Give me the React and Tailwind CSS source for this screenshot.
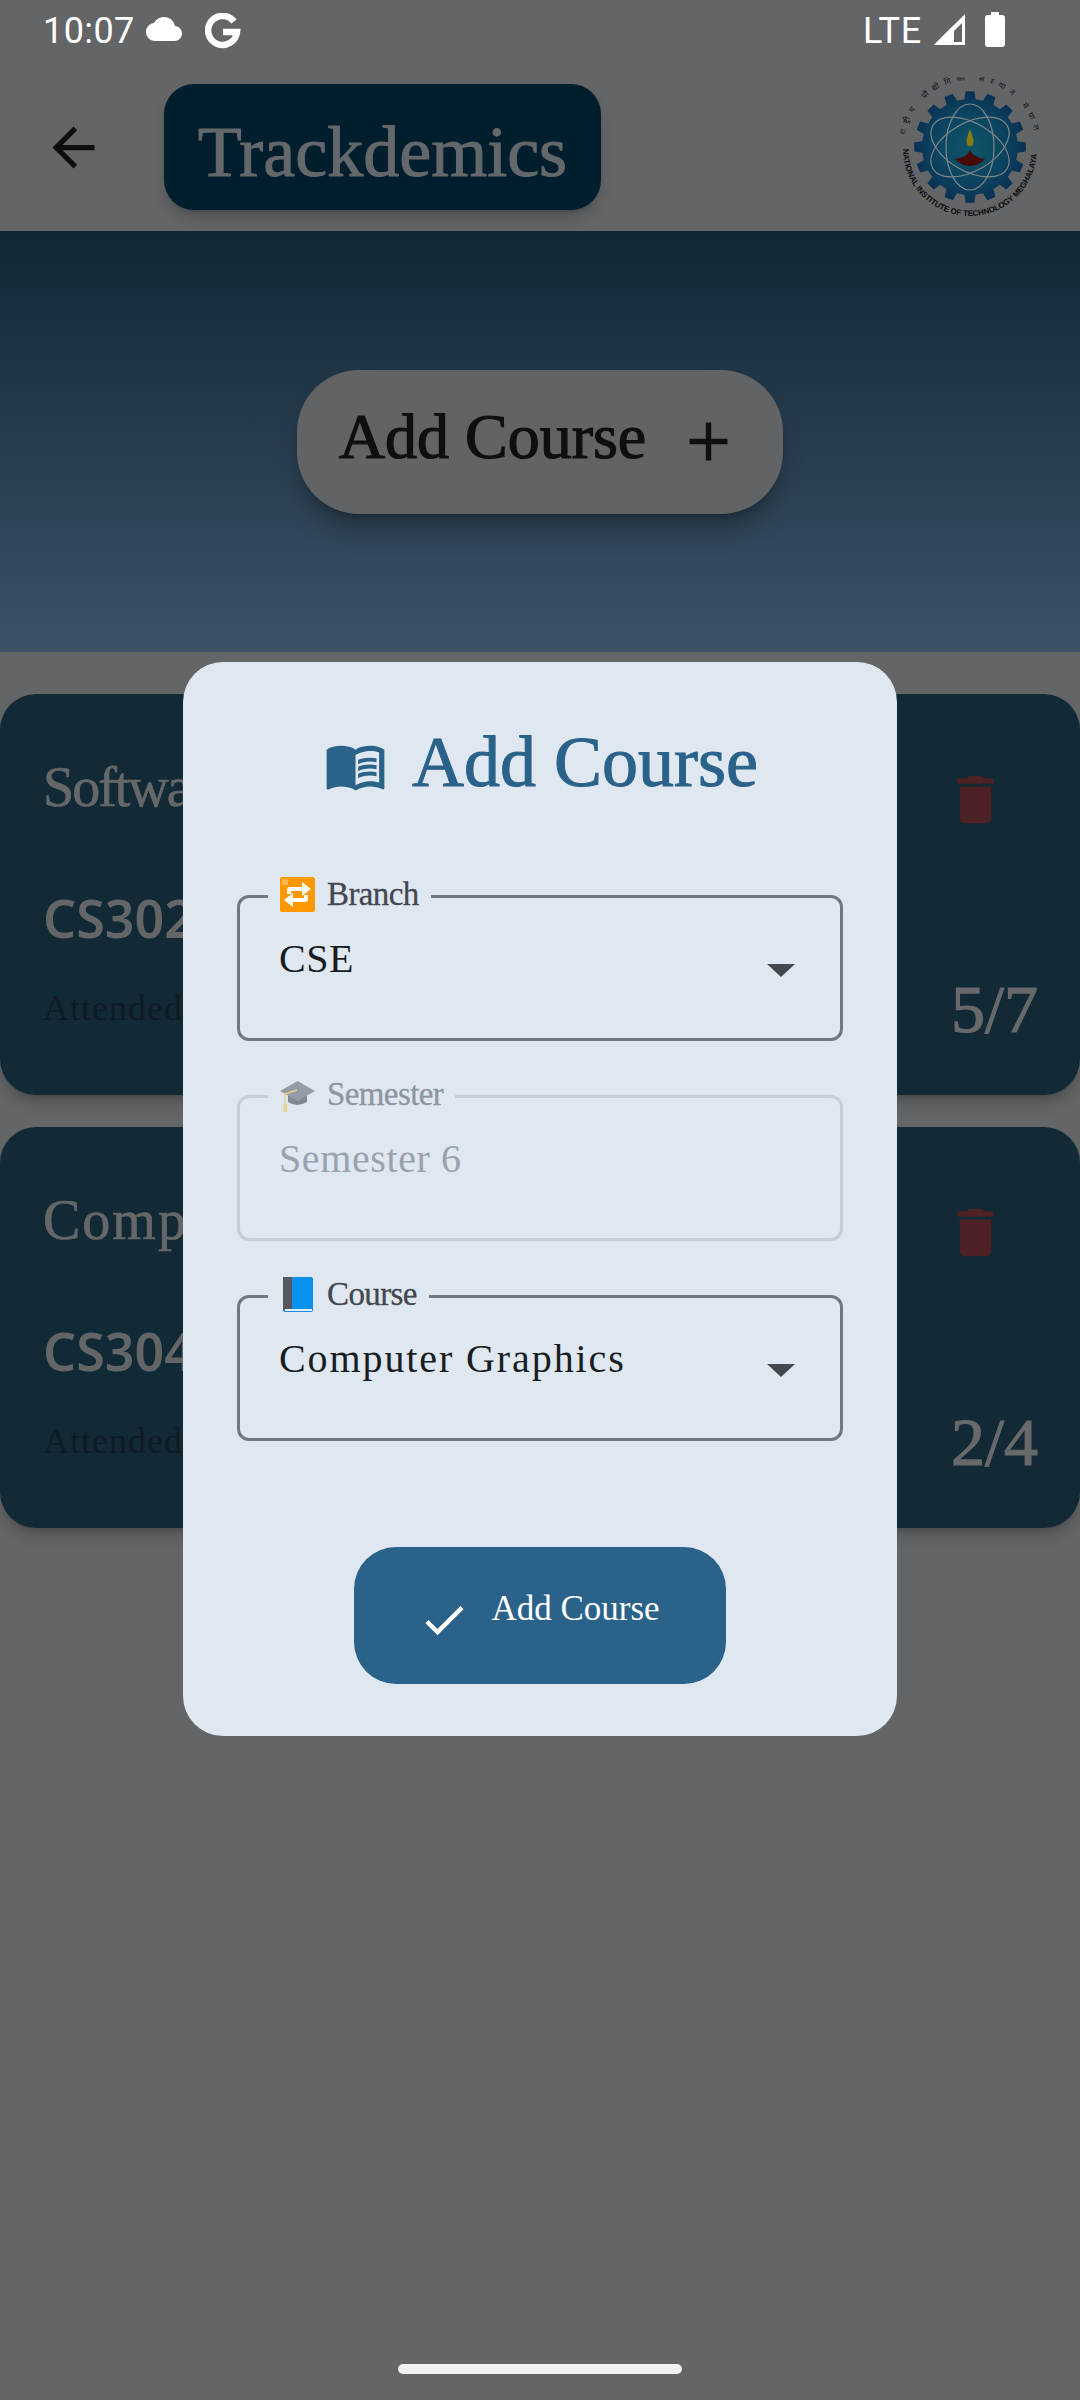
import React from 'react';

const serif = "font-['Liberation_Serif',serif]";

// gear outline for the college logo
function gearPath(cx, cy, outer, inner, teeth) {
    let d = '';
    const step = (Math.PI * 2) / teeth;
    for (let i = 0; i < teeth; i++) {
        const a = i * step - Math.PI / 2;
        const pts = [
            [inner, a - step * 0.5],
            [inner, a - step * 0.3],
            [outer, a - step * 0.2],
            [outer, a + step * 0.2],
            [inner, a + step * 0.3],
        ];
        pts.forEach(([r, t], j) => {
            const x = (cx + r * Math.cos(t)).toFixed(2);
            const y = (cy + r * Math.sin(t)).toFixed(2);
            d += `${i === 0 && j === 0 ? 'M' : 'L'}${x} ${y} `;
        });
    }
    return d + 'Z';
}

function Logo() {
    return (
        <svg width="140" height="140" viewBox="0 0 140 140">
            <defs>
                <radialGradient id="gearFill" cx="50%" cy="50%" r="50%">
                    <stop offset="0%" stopColor="#0f5568" />
                    <stop offset="65%" stopColor="#0c4360" />
                    <stop offset="100%" stopColor="#0a3054" />
                </radialGradient>
                <path id="bottomArc" d="M3 72 A67 67 0 0 0 137 72" />
                <path id="topArc" d="M5 58 A66 66 0 0 1 135 58" />
            </defs>
            <path d={gearPath(70, 70, 56, 48, 16)} fill="url(#gearFill)" />
            <g fill="none" stroke="#7f8688" strokeWidth="1.2">
                <ellipse cx="70" cy="70" rx="24" ry="43" />
                <ellipse cx="70" cy="70" rx="24" ry="43" transform="rotate(60 70 70)" />
                <ellipse cx="70" cy="70" rx="24" ry="43" transform="rotate(120 70 70)" />
            </g>
            <path d="M70 52 C73 60 74 64 73 67 C72 70 68 70 67 67 C66 64 67 60 70 52 Z" fill="#8a7a12" />
            <path d="M55 82 C63 81 68 78 70 73 C72 78 77 81 85 82 C80 87 75 89 70 89 C65 89 60 87 55 82 Z" fill="#470a05" />
            <text fontFamily="'Liberation Sans',sans-serif" fontWeight="700" fontSize="8" fill="#0c0c0c">
                <textPath href="#bottomArc" startOffset="0" textLength="205">NATIONAL INSTITUTE OF TECHNOLOGY MEGHALAYA</textPath>
            </text>
            <text fontFamily="'Noto Sans',sans-serif" fontSize="8" fill="#141414">
                <textPath href="#topArc" startOffset="0" textLength="190">राष्ट्रीय प्रौद्योगिकी संस्थान मेघालय</textPath>
            </text>
        </svg>
    );
}

function StatusBar() {
    return (
        <div className="h-[60px] flex items-center pl-[43px] pr-[75px] pt-[1px] text-white font-['Roboto',sans-serif] text-[36px]">
            <span className="leading-none tracking-[0.4px]">10:07</span>
            <svg className="ml-[11px] -mt-[3px]" width="36" height="36" viewBox="0 0 24 24" fill="#fff">
                <path d="M19.35 10.04C18.67 6.59 15.64 4 12 4 9.11 4 6.64 5.64 5.35 8.04 2.34 8.36 0 10.91 0 14c0 3.31 2.69 6 6 6h13c2.76 0 5-2.24 5-5 0-2.64-2.05-4.78-4.65-4.96z" />
            </svg>
            <svg className="ml-[23px]" width="36" height="36" viewBox="0 0 36 36" fill="none" stroke="#fff" strokeWidth="6.5">
                <path d="M29 8.5 A14.5 14.5 0 1 0 32 19 H18" />
            </svg>
            <span className="ml-auto leading-none tracking-[0.8px]">LTE</span>
            <svg className="ml-[11px] -mt-[3px]" width="33" height="33" viewBox="0 0 33 33">
                <path d="M32 1 V32 H1 Z M29 10 L10 29 H29 Z" fill="#fff" fillRule="evenodd" />
                <path d="M21 32 V12 L1 32 Z" fill="#fff" />
            </svg>
            <svg className="ml-[19px] -mt-[2px]" width="20" height="35" viewBox="0 0 20 35" fill="#fff">
                <path d="M6 0 H14 V3 H17 Q20 3 20 6 V32 Q20 35 17 35 H3 Q0 35 0 32 V6 Q0 3 3 3 H6 Z" />
            </svg>
        </div>
    );
}

function Header() {
    return (
        <div className="h-[171px] flex items-center pl-[42px] pr-[40px] pt-[3px]">
            <svg width="63" height="63" viewBox="0 0 24 24" fill="#0e0e0e">
                <path d="M20 11H7.83l5.59-5.59L12 4l-8 8 8 8 1.41-1.41L7.83 13H20v-2z" />
            </svg>
            <div className={`ml-[59px] w-[437px] h-[126px] rounded-[30px] bg-[#001e2e] shadow-lg shadow-black/20 flex items-center justify-center pt-[9px] text-[72px] text-[#65686a] [-webkit-text-stroke:1px_#65686a] ${serif}`}>
                Trackdemics
            </div>
            <div className="ml-auto">
                <Logo />
            </div>
        </div>
    );
}

function Hero() {
    return (
        <div className="h-[421px] flex items-center justify-center bg-gradient-to-b from-[#122736] to-[#3d5267]">
            <div className="w-[486px] h-[144px] rounded-[62px] bg-[#626364] shadow-xl shadow-black/25 flex items-center justify-center">
                <span className={`-mt-[9px] text-[64px] leading-none text-[#0f0f0f] [-webkit-text-stroke:1.2px_#0f0f0f] ${serif}`}>Add Course</span>
                <svg className="ml-[30px]" width="65" height="65" viewBox="0 0 24 24" fill="#0f0f0f">
                    <path d="M19 13h-6v6h-2v-6H5v-2h6V5h2v6h6v2z" />
                </svg>
            </div>
        </div>
    );
}

function CourseCard({ name, nameTracking, code, score }) {
    return (
        <div className="h-[401px] rounded-[36px] bg-[#122936] shadow-lg shadow-black/20 flex justify-between pl-[43px] pt-[59px]">
            <div className="flex flex-col">
                <span className={`text-[56px] leading-[68px] ${nameTracking} text-[#666768] [-webkit-text-stroke:0.7px_#666768] whitespace-nowrap ${serif}`}>{name}</span>
                <span className="mt-[62px] text-[52px] leading-[70px] font-semibold text-[#646566] font-['Noto_Sans',sans-serif]">{code}</span>
                <span className={`mt-[33px] text-[36px] leading-[44px] tracking-[1px] text-[#0f1b24] whitespace-nowrap ${serif}`}>Attended: {score}</span>
            </div>
            <div className="flex flex-col items-end pr-[42px]">
                <svg className="mt-[15px] mr-[31px]" width="63" height="63" viewBox="0 0 24 24" fill="#4e2125">
                    <path d="M6 19c0 1.1.9 2 2 2h8c1.1 0 2-.9 2-2V7H6v12zM19 4h-3.5l-1-1h-5l-1 1H5v2h14V4z" />
                </svg>
                <span className={`mt-[142px] text-[68px] leading-[72px] text-[#68696a] [-webkit-text-stroke:1.2px_#68696a] ${serif}`}>{score}</span>
            </div>
        </div>
    );
}

function RepeatEmoji() {
    return (
        <svg width="35" height="35" viewBox="0 0 35 35">
            <rect width="35" height="35" rx="2" fill="#ff9800" />
            <rect x="2" y="2" width="6" height="6" fill="#ffb74d" />
            <path d="M7 17 V13 Q7 10 10 10 H22 V5 L31 12 L22 19 V14 H11 V17 Z" fill="#fff" />
            <path d="M28 18 V22 Q28 25 25 25 H13 V30 L4 23 L13 16 V21 H24 V18 Z" fill="#fff" />
        </svg>
    );
}

function CapEmoji() {
    return (
        <svg width="35" height="35" viewBox="0 0 35 35">
            <path d="M8 17 V25 Q17 31 27 25 V17 Z" fill="#7f8791" />
            <path d="M17.5 4 L35 14 L17.5 24 L0 14 Z" fill="#959ca6" />
            <path d="M17 13 L5 17 V30" fill="none" stroke="#e8d28c" strokeWidth="1.6" />
            <rect x="3.5" y="27" width="3.5" height="8" fill="#e8d28c" />
        </svg>
    );
}

function BookEmoji() {
    return (
        <svg width="35" height="35" viewBox="0 0 35 35">
            <rect x="3" y="0" width="30" height="35" rx="2" fill="#1e88e5" />
            <rect x="3" y="0" width="9" height="33" fill="#54585f" />
            <rect x="12" y="0" width="20" height="32" fill="#0a91ee" />
            <rect x="5" y="32" width="27" height="2" fill="#e3eef8" />
        </svg>
    );
}

function Caret() {
    return (
        <svg className="mt-[29px]" width="28" height="13" viewBox="0 0 28 13" fill="#44474e">
            <path d="M0 0 H28 L14 13 Z" />
        </svg>
    );
}

function Field({ icon, label, value, disabled, tracking }) {
    return (
        <fieldset className={`h-[163px] rounded-[12px] border-[3px] ${disabled ? 'border-[#c7ced8]' : 'border-[#73777f]'}`}>
            <legend className="ml-[28px] px-[12px] h-[36px]">
                <span className="flex items-center gap-[12px] -mt-[2px]">
                    {icon}
                    <span className={`text-[33px] leading-[36px] tracking-[-0.6px] [-webkit-text-stroke:0.3px_currentColor] ${disabled ? 'text-[#8e95a0]' : 'text-[#44474e]'} ${serif}`}>{label}</span>
                </span>
            </legend>
            <div className="mt-[21px] pl-[39px] pr-[45px] flex justify-between items-start">
                <span className={`text-[40px] leading-[48px] ${tracking} ${disabled ? 'text-[#9aa2ad]' : 'text-[#191c20]'} ${serif}`}>{value}</span>
                {!disabled && <Caret />}
            </div>
        </fieldset>
    );
}

function AddCourseDialog() {
    return (
        <div className="absolute left-[183px] top-[662px] w-[714px] h-[1074px] rounded-[40px] bg-[#dfe7f1] px-[54px] flex flex-col">
            <div className="h-[200px] mb-[16px] flex items-center justify-center">
                <svg width="63" height="63" viewBox="0 0 24 24" fill="#2a628a" className="mt-[6px] ml-[2px]">
                    <path d="M21 5c-1.11-.35-2.33-.5-3.5-.5-1.95 0-4.05.4-5.5 1.5-1.45-1.1-3.55-1.5-5.5-1.5S2.45 4.9 1 6v14.65c0 .25.25.5.5.5.1 0 .15-.05.25-.05C3.1 20.45 5.05 20 6.5 20c1.95 0 4.05.4 5.5 1.5 1.35-.85 3.8-1.5 5.5-1.5 1.65 0 3.35.3 4.75 1.05.1.05.15.05.25.05.25 0 .5-.25.5-.5V6c-.6-.45-1.25-.75-2-1zm0 13.5c-1.1-.35-2.3-.5-3.5-.5-1.7 0-4.15.65-5.5 1.5V8c1.35-.85 3.8-1.5 5.5-1.5 1.2 0 2.4.15 3.5.5v11.5z" />
                    <path d="M17.5 10.5c.88 0 1.73.09 2.5.26V9.24c-.79-.15-1.64-.24-2.5-.24-1.7 0-3.24.29-4.5.83v1.66c1.13-.64 2.7-.99 4.5-.99zM13 12.49v1.66c1.13-.64 2.7-.99 4.5-.99.88 0 1.73.09 2.5.26V11.9c-.79-.15-1.64-.24-2.5-.24-1.7 0-3.24.3-4.5.83zM17.5 14.33c-1.7 0-3.24.29-4.5.83v1.66c1.13-.64 2.7-.99 4.5-.99.88 0 1.73.09 2.5.26v-1.52c-.79-.16-1.64-.24-2.5-.24z" />
                </svg>
                <span className={`ml-[25px] text-[72px] leading-none text-[#2a628a] [-webkit-text-stroke:1px_#2a628a] ${serif}`}>Add Course</span>
            </div>
            <div className="flex flex-col gap-[37px]">
                <Field icon={<RepeatEmoji />} label="Branch" value="CSE" tracking="tracking-[0.5px]" />
                <Field icon={<CapEmoji />} label="Semester" value="Semester 6" disabled tracking="tracking-[0.6px]" />
                <Field icon={<BookEmoji />} label="Course" value="Computer Graphics" tracking="tracking-[1.9px]" />
            </div>
            <button className="mt-[106px] mx-auto w-[372px] h-[137px] rounded-[42px] bg-[#2a628a] flex items-center justify-center">
                <svg width="52" height="52" viewBox="0 0 24 24" fill="#fff" className="mt-[8px] -ml-[2px]">
                    <path d="M9 16.17L4.83 12l-1.42 1.41L9 19 21 7l-1.41-1.41z" />
                </svg>
                <span className={`ml-[21px] -mt-[14px] text-[35px] leading-none text-white ${serif}`}>Add Course</span>
            </button>
        </div>
    );
}

export default function App() {
    return (
        <div className="relative h-[2400px] w-[1080px] overflow-hidden bg-[#646567] flex flex-col">
            <StatusBar />
            <Header />
            <Hero />
            <div className="pt-[42px] flex flex-col gap-[32px]">
                <CourseCard name="Software Engineering" nameTracking="tracking-[-2px]" code="CS302" score="5/7" />
                <CourseCard name="Computer Graphics" nameTracking="tracking-[2px]" code="CS304" score="2/4" />
            </div>
            <div className="mt-auto mb-[26px] mx-auto w-[284px] h-[10px] rounded-full bg-[#f2f2f2]" />
            <AddCourseDialog />
        </div>
    );
}
